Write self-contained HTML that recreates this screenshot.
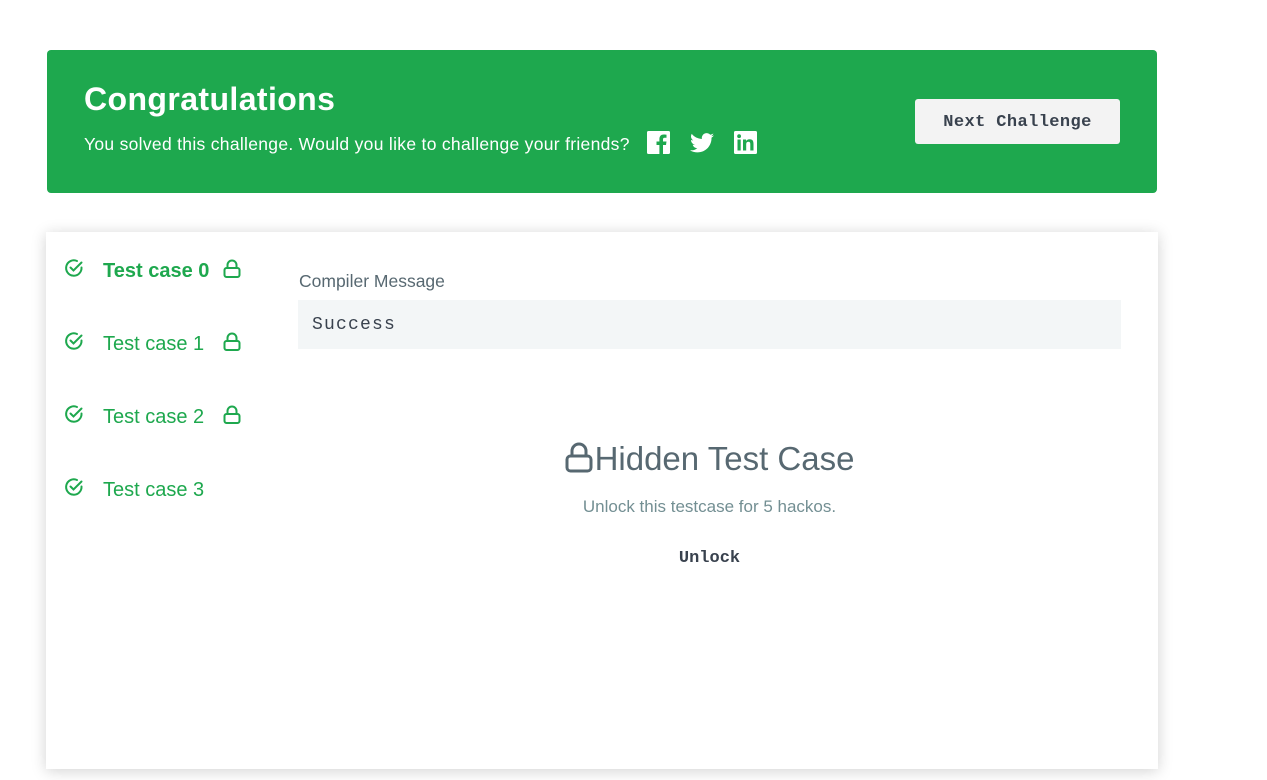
<!DOCTYPE html>
<html><head><meta charset="utf-8"><style>
body{margin:0;width:1267px;height:780px;background:#fff;font-family:"Liberation Sans",sans-serif;position:relative;overflow:hidden}
.banner{position:absolute;left:47px;top:50px;width:1110px;height:143px;background:#1ea84e;border-radius:4px}
.t1{position:absolute;left:37px;top:31px;color:#fff;font-weight:bold;font-size:32px;letter-spacing:0.4px;white-space:nowrap}
.t2{position:absolute;left:37px;top:84px;color:#fff;font-size:17.5px;letter-spacing:0.3px;white-space:nowrap}
.btn{position:absolute;left:868px;top:49px;width:205px;height:45px;background:#f3f3f3;border-radius:3px;font-family:"Liberation Mono",monospace;font-weight:bold;font-size:17px;color:#39424e;text-align:center;line-height:47px;letter-spacing:0.4px}
.card{position:absolute;left:46px;top:232px;width:1112px;height:537px;background:#fff;box-shadow:0 2px 14px rgba(0,0,0,0.18)}
.tc{position:absolute;left:18px;height:24px;color:#1ea84e;font-size:20px;line-height:24px}
.tc svg{position:absolute}
.tc span{top:1px}
.label{position:absolute;left:253px;top:39px;font-size:17.5px;color:#576871}
.box{position:absolute;left:252px;top:68px;width:823px;height:49px;background:#f3f6f7;font-family:"Liberation Mono",monospace;font-size:18px;color:#39424e;line-height:51px;padding-left:14px;box-sizing:border-box;letter-spacing:1.2px}
.h{position:absolute;left:252px;width:823px;text-align:center}
</style></head><body>
<div class="banner">
<div class="t1">Congratulations</div>
<div class="t2">You solved this challenge. Would you like to challenge your friends?</div>
<svg style="position:absolute;left:600px;top:81px" width="23" height="23" viewBox="0 0 23 23"><rect width="23" height="23" rx="1.5" fill="#fff"/><path d="M16 23V14h3l.5-3.5H16V8.5c0-1 .3-1.7 1.7-1.7h1.8V3.7c-.3 0-1.4-.2-2.7-.2-2.7 0-4.4 1.6-4.4 4.6v2.4H9.5V14h2.9v9z" fill="#1ea84e"/></svg>
<svg style="position:absolute;left:643px;top:83px" width="24" height="20" viewBox="0 0 24 20"><path d="M24 2.4c-.9.4-1.8.6-2.8.8 1-.6 1.8-1.6 2.2-2.7-1 .6-2 1-3.1 1.2A4.9 4.9 0 0 0 11.9 6 14 14 0 0 1 1.7.9a4.9 4.9 0 0 0 1.5 6.6c-.8 0-1.6-.3-2.2-.6 0 2.4 1.700 4.400 3.900 4.800-.7.2-1.5.2-2.2.1.6 2 2.4 3.400 4.600 3.400A9.900 9.900 0 0 1 0 17.200 14 14 0 0 0 7.500 19.400c9 0 14-7.500 14-14v-.6c1-.7 1.800-1.600 2.500-2.400z" fill="#fff"/></svg>
<svg style="position:absolute;left:687px;top:81px" width="23" height="23" viewBox="0 0 23 23"><rect width="23" height="23" rx="1.5" fill="#fff"/><rect x="3.5" y="8.5" width="3.2" height="11" fill="#1ea84e"/><circle cx="5.1" cy="5.2" r="1.9" fill="#1ea84e"/><path d="M9 8.5h3v1.6c.5-1 1.8-1.9 3.6-1.9 3.300 0 3.900 2.100 3.900 4.900v6.400h-3.200v-5.700c0-1.400 0-3-1.900-3s-2.200 1.400-2.200 2.900v5.800H9z" fill="#1ea84e"/></svg>
<div class="btn">Next Challenge</div>
</div>
<div class="card">
<div class="tc" style="top:26px"><svg style="left:0;top:0px" width="20" height="20" viewBox="0 0 20 20" fill="none" stroke="#1ea84e" stroke-width="2" stroke-linecap="round"><path d="M17.5 9.5A7.7 7.7 0 1 1 13 3"/><path d="M6.5 9.5l3 3 8-8"/></svg><span style="position:absolute;left:39px;font-weight:bold;white-space:nowrap">Test case 0</span><svg style="left:159px;top:1px" width="18" height="20" viewBox="0 0 18 20" fill="none" stroke="#1ea84e" stroke-width="2"><rect x="1.5" y="9" width="15" height="9" rx="2"/><path d="M4.5 9V6a4.5 4.5 0 0 1 9 0v3"/></svg></div>
<div class="tc" style="top:99px"><svg style="left:0;top:0px" width="20" height="20" viewBox="0 0 20 20" fill="none" stroke="#1ea84e" stroke-width="2" stroke-linecap="round"><path d="M17.5 9.5A7.7 7.7 0 1 1 13 3"/><path d="M6.5 9.5l3 3 8-8"/></svg><span style="position:absolute;left:39px;white-space:nowrap">Test case 1</span><svg style="left:159px;top:1px" width="18" height="20" viewBox="0 0 18 20" fill="none" stroke="#1ea84e" stroke-width="2"><rect x="1.5" y="9" width="15" height="9" rx="2"/><path d="M4.5 9V6a4.5 4.5 0 0 1 9 0v3"/></svg></div>
<div class="tc" style="top:172px"><svg style="left:0;top:0px" width="20" height="20" viewBox="0 0 20 20" fill="none" stroke="#1ea84e" stroke-width="2" stroke-linecap="round"><path d="M17.5 9.5A7.7 7.7 0 1 1 13 3"/><path d="M6.5 9.5l3 3 8-8"/></svg><span style="position:absolute;left:39px;white-space:nowrap">Test case 2</span><svg style="left:159px;top:1px" width="18" height="20" viewBox="0 0 18 20" fill="none" stroke="#1ea84e" stroke-width="2"><rect x="1.5" y="9" width="15" height="9" rx="2"/><path d="M4.5 9V6a4.5 4.5 0 0 1 9 0v3"/></svg></div>
<div class="tc" style="top:245px"><svg style="left:0;top:0px" width="20" height="20" viewBox="0 0 20 20" fill="none" stroke="#1ea84e" stroke-width="2" stroke-linecap="round"><path d="M17.5 9.5A7.7 7.7 0 1 1 13 3"/><path d="M6.5 9.5l3 3 8-8"/></svg><span style="position:absolute;left:39px;white-space:nowrap">Test case 3</span></div>
<div class="label">Compiler Message</div>
<div class="box">Success</div>
<div class="h" style="top:206px;font-size:33px;color:#576871;line-height:42px"><svg style="vertical-align:-3px;margin-right:2px" width="28" height="31" viewBox="0 0 28 31" fill="none" stroke="#576871" stroke-width="3"><rect x="2" y="14" width="24" height="15" rx="3.5"/><path d="M7 14V9a7 7 0 0 1 14 0v5"/></svg>Hidden Test Case</div>
<div class="h" style="top:265px;font-size:17px;color:#738f93">Unlock this testcase for 5 hackos.</div>
<div class="h" style="top:317px;font-size:17px;color:#39424e;font-family:'Liberation Mono',monospace;font-weight:bold">Unlock</div>
</div>
</body></html>
